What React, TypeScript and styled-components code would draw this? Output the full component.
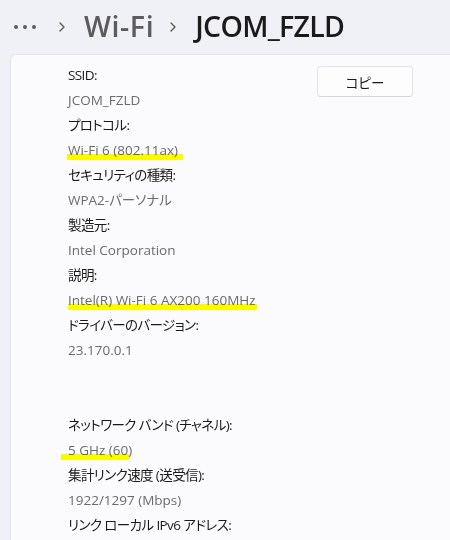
import React from "react"
import styled, { createGlobalStyle } from "styled-components"

const GlobalStyle = createGlobalStyle`
    html, body {
        margin: 0;
        padding: 0;
        background: #f0f1f6;
        overflow: hidden;
    }
    body {
        font-family: "Open Sans", "Noto Sans CJK JP", sans-serif;
    }
`

type Item = {label: string, value: string, mark?: {left: number, width: number}}

const group1: Item[] = [
    {label: "SSID:", value: "JCOM_FZLD"},
    {label: "プロトコル:", value: "Wi-Fi 6 (802.11ax)", mark: {left: -1, width: 116}},
    {label: "セキュリティの種類:", value: "WPA2-パーソナル"},
    {label: "製造元:", value: "Intel Corporation"},
    {label: "説明:", value: "Intel(R) Wi-Fi 6 AX200 160MHz", mark: {left: 0, width: 189}},
    {label: "ドライバーのバージョン:", value: "23.170.0.1"},
]

const group2: Item[] = [
    {label: "ネットワーク バンド (チャネル):", value: "5 GHz (60)", mark: {left: -7, width: 68}},
    {label: "集計リンク速度 (送受信):", value: "1922/1297 (Mbps)"},
    {label: "リンク ローカル IPv6 アドレス:", value: ""},
]

const Chevron = () => (
    <svg width="8" height="12" viewBox="0 0 8 12">
        <path d="M2 2 L6 6 L2 10" fill="none" stroke="#5c5c5c" strokeWidth="1.4" strokeLinecap="round" strokeLinejoin="round" />
    </svg>
)

const App = () => {
    const renderItems = (items: Item[]) => items.map((item, i) => (
        <React.Fragment key={i}>
            <Label>{item.label}</Label>
            {item.value && (
                <Value>
                    <MarkWrap>
                        {item.value}
                        {item.mark && <Highlight style={{left: item.mark.left, width: item.mark.width}} />}
                    </MarkWrap>
                </Value>
            )}
        </React.Fragment>
    ))

    return (
        <>
            <GlobalStyle />
            <Page>
                <Breadcrumb>
                    <Dots>
                        <Dot /><Dot /><Dot />
                    </Dots>
                    <Sep><Chevron /></Sep>
                    <Crumb>Wi-Fi</Crumb>
                    <Sep><Chevron /></Sep>
                    <Crumb current>JCOM_FZLD</Crumb>
                </Breadcrumb>
                <Panel>
                    <Props>
                        {renderItems(group1)}
                        <Spacer />
                        {renderItems(group2)}
                    </Props>
                    <CopyButton>コピー</CopyButton>
                </Panel>
            </Page>
        </>
    )
}

const Page = styled.div`
    width: 450px;
    height: 540px;
    display: flex;
    flex-direction: column;
`

const Breadcrumb = styled.div`
    height: 54px;
    display: flex;
    align-items: center;
    padding-left: 14px;
    padding-bottom: 2px;
    box-sizing: border-box;
    font-family: "Open Sans", sans-serif;
`

const Dots = styled.div`
    display: flex;
    gap: 5px;
    margin-right: 22px;
    margin-top: 2px;
`

const Dot = styled.span`
    width: 4px;
    height: 4px;
    border-radius: 50%;
    background: #5c5c5c;
`

const Sep = styled.span`
    display: flex;
    align-items: center;
    margin: 2px 18px 0 0;
`

const Crumb = styled.span<{current?: boolean}>`
    font-size: 28.5px;
    font-weight: 600;
    color: ${p => p.current ? "#1b1b1b" : "#5c5c5c"};
    margin-right: 15px;
    letter-spacing: ${p => p.current ? "-0.7px" : "0.6px"};
`

const Panel = styled.div`
    flex: 1;
    margin-left: 10px;
    background: #fbfbfd;
    border-top: 1px solid #e6e6ea;
    border-left: 1px solid #e6e6ea;
    border-top-left-radius: 6px;
    display: flex;
    align-items: flex-start;
    padding: 8px 0 0 57px;
`

const Props = styled.div`
    display: flex;
    flex-direction: column;
    width: 249px;
`

const Label = styled.div`
    height: 25px;
    line-height: 25px;
    font-size: 13.5px;
    color: #1a1a1a;
    white-space: nowrap;
    font-feature-settings: "palt";
    letter-spacing: -0.6px;
`

const Value = styled(Label)`
    color: #6b6b6b;
    letter-spacing: 0;
`

const MarkWrap = styled.span`
    position: relative;
`

const Highlight = styled.span`
    position: absolute;
    top: 13px;
    height: 6px;
    background: #ffff00;
    mix-blend-mode: multiply;
`

const Spacer = styled.div`
    height: 50px;
`

const CopyButton = styled.button`
    width: 96px;
    height: 31px;
    margin-top: 3px;
    background: #fdfdfd;
    border: 1px solid #e3e3e6;
    border-bottom-color: #d6d6da;
    border-radius: 4px;
    font-family: "Open Sans", "Noto Sans CJK JP", sans-serif;
    font-size: 13.5px;
    color: #1a1a1a;
    font-feature-settings: "palt";
`

export default App
